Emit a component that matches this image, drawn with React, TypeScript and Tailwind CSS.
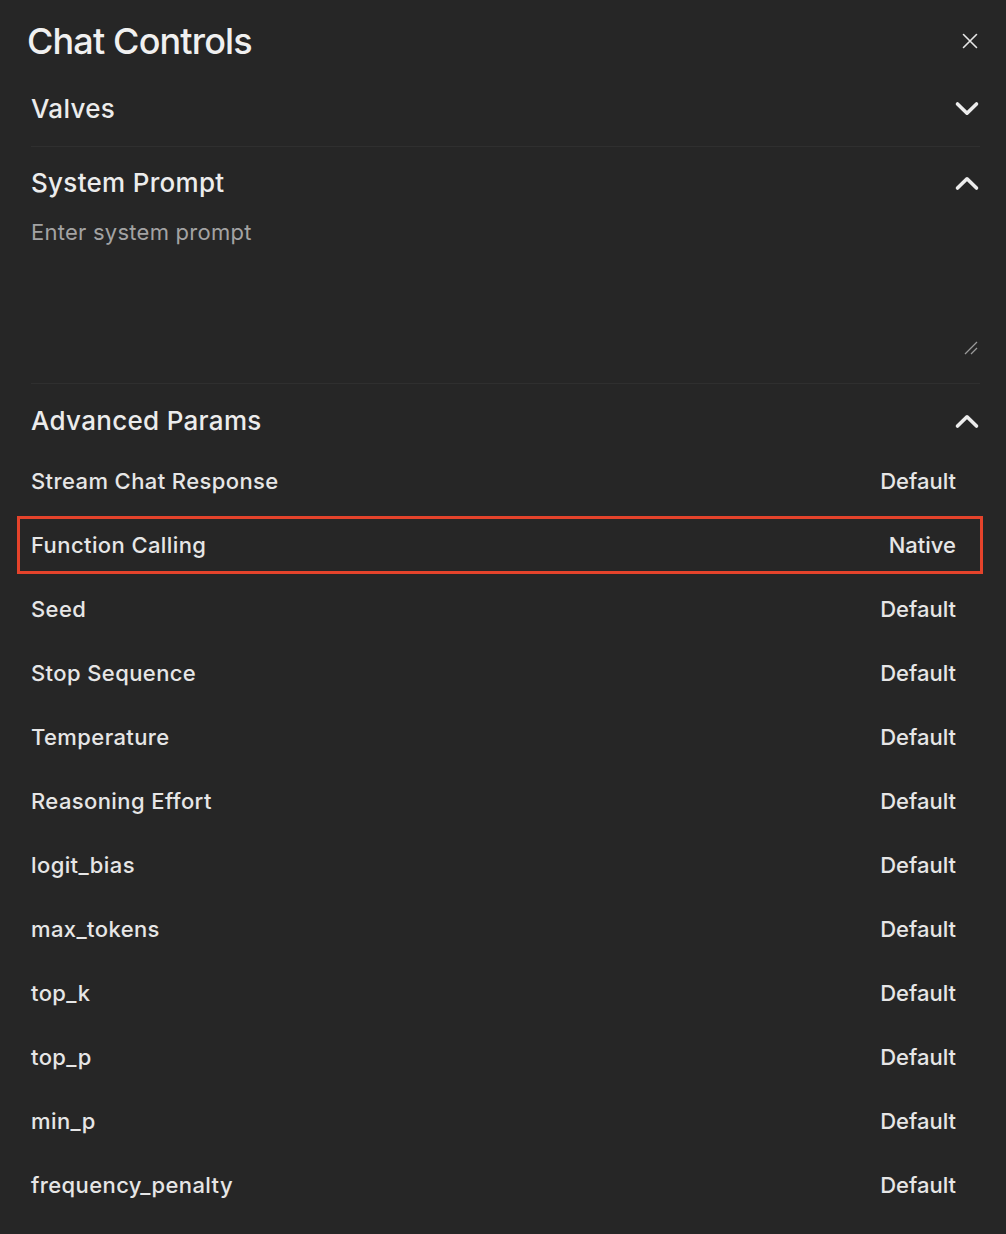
import React from "react";

const rows: [string, string][] = [
  ["Stream Chat Response", "Default"],
  ["Function Calling", "Native"],
  ["Seed", "Default"],
  ["Stop Sequence", "Default"],
  ["Temperature", "Default"],
  ["Reasoning Effort", "Default"],
  ["logit_bias", "Default"],
  ["max_tokens", "Default"],
  ["top_k", "Default"],
  ["top_p", "Default"],
  ["min_p", "Default"],
  ["frequency_penalty", "Default"],
];

function Chevron({ up }: { up?: boolean }) {
  return (
    <svg width="26" height="16" viewBox="0 0 26 16" fill="none" className="block">
      <polyline
        points={up ? "3.5,13 13,3.8 22.5,13" : "3.5,3 13,12.2 22.5,3"}
        stroke="#ececec"
        strokeWidth="3.6"
        strokeLinecap="round"
        strokeLinejoin="round"
      />
    </svg>
  );
}

function SectionHeader({ title, up }: { title: string; up?: boolean }) {
  return (
    <div className="flex h-[36px] items-center justify-between">
      <div className="text-[26px] font-medium leading-[36px] tracking-[0.3px] text-[#ececec]">{title}</div>
      <Chevron up={up} />
    </div>
  );
}

export default function App() {
  return (
    <div
      className="min-h-screen w-[1006px] bg-[#262626] pt-[19px] text-[#e6e6e6]"
      style={{ fontFamily: "Inter, 'Liberation Sans', sans-serif" }}
    >
      <div className="flex h-[44px] items-center justify-between pl-[27px] pr-[28px]">
        <div className="text-[36px] font-medium leading-[44px] tracking-[-0.85px] text-[#f0f0f0]">Chat Controls</div>
        <svg width="16" height="16" viewBox="0 0 16 16" fill="none">
          <path d="M1.5 1.5l13 13M14.5 1.5l-13 13" stroke="#e6e6e6" strokeWidth="1.6" strokeLinecap="round" />
        </svg>
      </div>

      <div className="ml-[31px] mr-[26px] mt-[9px]">
        <div className="border-b border-[#2f2f2f] py-[19px]">
          <SectionHeader title="Valves" />
        </div>

        <div className="border-b border-[#2f2f2f] pb-[19px] pt-[18px]">
          <SectionHeader title="System Prompt" up />
          <div className="relative mt-[13px] h-[150px]">
            <div className="text-[22px] leading-[36px] tracking-[0.25px] text-[#a3a3a3]">Enter system prompt</div>
            <svg className="absolute bottom-[9px] right-[2px]" width="14" height="14" viewBox="0 0 14 14" fill="none">
              <path d="M1 13L13 1M7 13L13 7" stroke="#9a9a9a" strokeWidth="1.3" />
            </svg>
          </div>
        </div>

        <div className="pt-[19px]">
          <SectionHeader title="Advanced Params" up />
          <div className="mt-[10px]">
            {rows.map(([label, value], i) => (
              <div key={label} className="relative flex h-[64px] items-center justify-between pr-[24px]">
                <div className="text-[22px] font-medium tracking-[0.4px] text-[#e6e6e6]">{label}</div>
                <div className="text-[22px] font-medium text-[#e6e6e6]">{value}</div>
                {i === 1 && (
                  <div className="pointer-events-none absolute bottom-[3px] left-[-14px] right-[-3px] top-[3px] border-[3px] border-[#e5432b]" />
                )}
              </div>
            ))}
          </div>
        </div>
      </div>
    </div>
  );
}
